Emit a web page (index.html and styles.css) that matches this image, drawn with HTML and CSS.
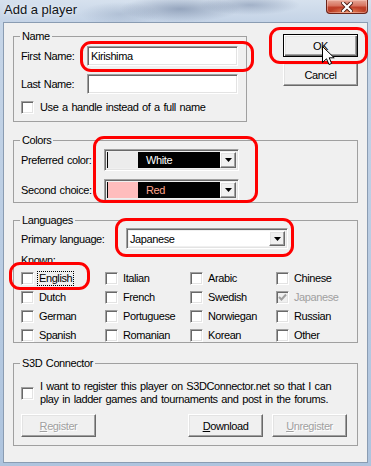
FILE: index.html
```html
<!DOCTYPE html>
<html>
<head>
<meta charset="utf-8">
<title>Add a player</title>
<link rel="stylesheet" href="styles.css">
</head>
<body>
<div class="window">
  <div class="titlebar">
    <span class="title">Add a player</span>
    <div class="close">
      <svg width="12" height="10" viewBox="0 0 12 10"><path d="M2 1 L10 9 M10 1 L2 9" stroke="#4a1a12" stroke-width="4" stroke-linecap="square"/><path d="M2 1 L10 9 M10 1 L2 9" stroke="#ffffff" stroke-width="2.2" stroke-linecap="square"/></svg>
    </div>
  </div>
  <div class="client">
    <div class="top">
      <fieldset class="group name-group">
        <legend>Name</legend>
        <div class="field-row">
          <span class="lbl lbl-name">First Name:</span>
          <div class="textbox">Kirishima</div>
        </div>
        <div class="field-row gap8">
          <span class="lbl lbl-name">Last Name:</span>
          <div class="textbox"></div>
        </div>
        <div class="check-row handle-row">
          <span class="cb"></span>
          <span>Use a handle instead of a full name</span>
        </div>
      </fieldset>
      <div class="btn-col">
        <div class="btn btn-default">OK</div>
        <div class="btn">Cancel</div>
      </div>
    </div>

    <fieldset class="group colors-group">
      <legend>Colors</legend>
      <div class="combo-row">
        <span class="lbl lbl-color">Preferred color:</span>
        <div class="combo combo-color">
          <div class="combo-field dark">
            <span class="swatch swatch-white"></span>
            <span class="color-name white-text">White</span>
          </div>
          <div class="drop"><svg width="7" height="4" viewBox="0 0 7 4"><polygon points="0,0 7,0 3.5,4" fill="#000"/></svg></div>
        </div>
      </div>
      <div class="combo-row gap8">
        <span class="lbl lbl-color">Second choice:</span>
        <div class="combo combo-color">
          <div class="combo-field dark">
            <span class="swatch swatch-red"></span>
            <span class="color-name red-text">Red</span>
          </div>
          <div class="drop"><svg width="7" height="4" viewBox="0 0 7 4"><polygon points="0,0 7,0 3.5,4" fill="#000"/></svg></div>
        </div>
      </div>
    </fieldset>

    <fieldset class="group lang-group">
      <legend>Languages</legend>
      <div class="combo-row lang-row">
        <span class="lbl lbl-lang">Primary language:</span>
        <div class="combo combo-lang">
          <div class="combo-field light"><span class="lang-text">Japanese</span></div>
          <div class="drop"><svg width="7" height="4" viewBox="0 0 7 4"><polygon points="0,0 7,0 3.5,4" fill="#000"/></svg></div>
        </div>
      </div>
      <div class="known">Known:</div>
      <div class="lang-grid">
        <div class="lang"><span class="cb"></span><span class="focus">English</span></div>
        <div class="lang"><span class="cb"></span><span>Italian</span></div>
        <div class="lang"><span class="cb"></span><span>Arabic</span></div>
        <div class="lang"><span class="cb"></span><span>Chinese</span></div>
        <div class="lang"><span class="cb"></span><span>Dutch</span></div>
        <div class="lang"><span class="cb"></span><span>French</span></div>
        <div class="lang"><span class="cb"></span><span>Swedish</span></div>
        <div class="lang disabled"><span class="cb cb-disabled"><svg width="9" height="9" viewBox="0 0 9 9"><polyline points="1,4 3.5,6.5 8,1.5" fill="none" stroke="#a0a0a0" stroke-width="2"/></svg></span><span>Japanese</span></div>
        <div class="lang"><span class="cb"></span><span>German</span></div>
        <div class="lang"><span class="cb"></span><span>Portuguese</span></div>
        <div class="lang"><span class="cb"></span><span>Norwiegan</span></div>
        <div class="lang"><span class="cb"></span><span>Russian</span></div>
        <div class="lang"><span class="cb"></span><span>Spanish</span></div>
        <div class="lang"><span class="cb"></span><span>Romanian</span></div>
        <div class="lang"><span class="cb"></span><span>Korean</span></div>
        <div class="lang"><span class="cb"></span><span>Other</span></div>
      </div>
    </fieldset>

    <fieldset class="group s3d-group">
      <legend>S3D Connector</legend>
      <div class="check-row s3d-row">
        <span class="cb"></span>
        <span class="s3d-text">I want to register this player on S3DConnector.net so that I can<br>play in ladder games and tournaments and post in the forums.</span>
      </div>
      <div class="btn-row">
        <div class="btn btn-disabled"><u>R</u>egister</div>
        <div class="btn btn-download"><u>D</u>ownload</div>
        <div class="btn btn-disabled btn-unreg"><u>U</u>nregister</div>
      </div>
    </fieldset>
  </div>

  <div class="ring ring-first"></div>
  <div class="ring ring-ok"></div>
  <div class="ring ring-colors"></div>
  <div class="ring ring-lang"></div>
  <div class="ring ring-english"></div>

  <svg class="cursor" width="13" height="20" viewBox="0 0 13 20">
    <path d="M0.5 0.5 L0.5 16.5 L4.5 12.8 L7 18.5 L9.6 17.4 L7.2 11.8 L12.2 11.8 Z" fill="#ffffff" stroke="#000000" stroke-width="1" stroke-linejoin="miter"/>
  </svg>
</div>
</body>
</html>
```

FILE: styles.css
```css
* { box-sizing: border-box; }

html, body {
  margin: 0;
  padding: 0;
}

body {
  width: 371px;
  height: 466px;
  overflow: hidden;
  background: #a9bfd9;
  font-family: "Liberation Sans", Arial, sans-serif;
  font-size: 11px;
  letter-spacing: -0.4px;
  word-spacing: 1px;
  color: #000;
}

.window {
  position: relative;
  width: 371px;
  height: 466px;
  display: flex;
  flex-direction: column;
  background: linear-gradient(180deg, #c7d6e8 0%, #aec4de 100%);
}

/* ---------- title bar ---------- */
.titlebar {
  height: 22px;
  display: flex;
  align-items: flex-start;
  background:
    radial-gradient(ellipse 60px 13px at 180px 9px, rgba(80, 100, 135, 0.45), rgba(80, 100, 135, 0)),
    radial-gradient(ellipse 50px 10px at 250px 5px, rgba(90, 110, 145, 0.4), rgba(90, 110, 145, 0)),
    radial-gradient(ellipse 40px 12px at 120px 14px, rgba(120, 140, 170, 0.3), rgba(120, 140, 170, 0)),
    linear-gradient(180deg, #d6e1ee 0%, #c4d3e6 100%);
}

.title {
  font-family: "Liberation Sans", Arial, sans-serif;
  font-size: 13px;
  letter-spacing: 0;
  word-spacing: 0;
  line-height: 19px;
  padding-left: 4px;
  color: #101418;
  text-shadow: 0 0 5px rgba(255, 255, 255, 0.95);
}

.close {
  margin-left: auto;
  margin-right: 3px;
  width: 42px;
  height: 14px;
  border: 1px solid #6b2419;
  border-top: none;
  border-radius: 0 0 4px 4px;
  background:
    radial-gradient(ellipse 18px 5px at 21px 12px, rgba(255, 170, 120, 0.7), rgba(255, 170, 120, 0)),
    linear-gradient(180deg, #e6a797 0%, #d7735f 45%, #c0402a 55%, #b7391f 100%);
  display: flex;
  align-items: center;
  justify-content: center;
  box-shadow: inset 0 0 0 1px rgba(255, 210, 200, 0.45);
}

/* ---------- client area ---------- */
.client {
  margin: 0 3px;
  height: 441px;
  background: #f0f0f0;
  border: 1px solid #8a9cb2;
}

.top {
  display: flex;
  align-items: flex-start;
  margin-top: 6px;
}

.group {
  margin: 0 0 0 9px;
  border: 1px solid #a0a0a0;
  width: 345px;
  min-inline-size: 0;
}

.group legend {
  padding: 0 2px;
  margin-left: -1px;
  line-height: 14px;
  height: 14px;
}

.lbl {
  flex: none;
  line-height: 14px;
  white-space: nowrap;
}

/* name group */
.name-group {
  width: 234px;
  padding: 3px 7px 7px 7px;
}

.field-row {
  display: flex;
  align-items: center;
  height: 20px;
}

.gap8 { margin-top: 8px; }

.lbl-name { width: 66px; }

.textbox {
  width: 151px;
  height: 20px;
  background: #fff;
  border: 1px solid;
  border-color: #a0a0a0 #ffffff #ffffff #a0a0a0;
  box-shadow: inset 1px 1px 0 #696969, inset -1px -1px 0 #e3e3e3;
  padding-left: 3px;
  line-height: 18px;
  white-space: nowrap;
}

.check-row {
  display: flex;
  align-items: center;
  gap: 6px;
}

.handle-row {
  margin-top: 7px;
  height: 13px;
  line-height: 13px;
  white-space: nowrap;
}

.cb {
  flex: none;
  width: 13px;
  height: 13px;
  background: #fff;
  border: 1px solid;
  border-color: #a0a0a0 #ffffff #ffffff #a0a0a0;
  box-shadow: inset 1px 1px 0 #696969, inset -1px -1px 0 #e3e3e3;
  display: flex;
  align-items: center;
  justify-content: center;
}

.cb-disabled { background: #f0f0f0; }

/* buttons */
.btn-col {
  margin-left: 36px;
  margin-top: 5px;
  display: flex;
  flex-direction: column;
  gap: 6px;
}

.btn {
  width: 75px;
  height: 23px;
  background: #f0f0f0;
  border: 1px solid;
  border-color: #ffffff #696969 #696969 #ffffff;
  box-shadow: inset -1px -1px 0 #a0a0a0, inset 1px 1px 0 #e3e3e3;
  display: flex;
  align-items: center;
  justify-content: center;
  line-height: 14px;
  white-space: nowrap;
}

.btn-default {
  border: 1px solid #000;
  box-shadow: inset 1px 1px 0 #ffffff, inset -1px -1px 0 #696969, inset -2px -2px 0 #a0a0a0, inset 2px 2px 0 #e3e3e3;
}

.btn-disabled {
  color: #a0a0a0;
  text-shadow: 1px 1px 0 #ffffff;
}

.btn u { text-decoration: underline; text-underline-offset: 1px; }

/* colors group */
.colors-group {
  margin-top: 11px;
  padding: 2px 7px 1px 7px;
}

.combo-row {
  display: flex;
  align-items: center;
}

.lbl-color { width: 83px; }

.combo {
  display: flex;
  height: 22px;
  border: 1px solid;
  border-color: #a0a0a0 #ffffff #ffffff #a0a0a0;
  box-shadow: inset 1px 1px 0 #696969, inset -1px -1px 0 #e3e3e3;
  padding: 2px;
}

.combo-color { width: 135px; }

.combo-field {
  flex: 1;
  display: flex;
  align-items: center;
  min-width: 0;
}

.combo-field.dark { background: #000; }
.combo-field.light { background: #fff; }

.swatch {
  width: 30px;
  height: 16px;
  margin-left: 1px;
  flex: none;
}

.swatch-white { background: #ececec; }
.swatch-red { background: #ffbdbd; }

.color-name {
  margin-left: 8px;
  line-height: 14px;
}

.white-text { color: #ffffff; }
.red-text { color: #ffa58c; }

.drop {
  width: 16px;
  flex: none;
  background: #f0f0f0;
  border: 1px solid;
  border-color: #ffffff #696969 #696969 #ffffff;
  box-shadow: inset -1px -1px 0 #a0a0a0, inset 1px 1px 0 #e3e3e3;
  display: flex;
  align-items: center;
  justify-content: center;
}

/* languages group */
.lang-group {
  margin-top: 10px;
  padding: 1px 7px 0 7px;
}

.lbl-lang { width: 105px; }

.combo-lang {
  width: 162px;
  height: 21px;
}

.lang-text {
  padding-left: 1px;
  line-height: 14px;
}

.known {
  margin-top: 4px;
  line-height: 14px;
}

.lang-grid {
  margin-top: 5px;
  display: grid;
  grid-template-columns: 84px 85px 86px 1fr;
  grid-auto-rows: 13px;
  row-gap: 6px;
}

.lang {
  display: flex;
  align-items: center;
  gap: 5px;
  line-height: 13px;
  white-space: nowrap;
}

.lang.disabled { color: #a0a0a0; }

.focus {
  outline: 1px dotted #000;
  outline-offset: 0;
  padding: 0 1px;
  margin-left: -1px;
}

/* S3D group */
.s3d-group {
  margin-top: 13px;
  padding: 10px 10px 8px 7px;
}

.s3d-row { gap: 6px; }

.s3d-text {
  line-height: 13px;
  white-space: nowrap;
}

.btn-row {
  display: flex;
  margin-top: 8px;
}

.btn-download { margin-left: auto; }
.btn-unreg { margin-left: 9px; }

/* ---------- annotation overlays ---------- */
.ring {
  position: absolute;
  border: 3px solid #ff0000;
  border-radius: 11px;
}

.ring-first { left: 80px; top: 41px; width: 174px; height: 31px; }
.ring-ok { left: 269px; top: 27px; width: 99px; height: 37px; }
.ring-colors { left: 93px; top: 136px; width: 165px; height: 67px; }
.ring-lang { left: 115px; top: 218px; width: 179px; height: 39px; }
.ring-english { left: 9px; top: 262px; width: 81px; height: 28px; }

.cursor {
  position: absolute;
  left: 322px;
  top: 46px;
}
```
